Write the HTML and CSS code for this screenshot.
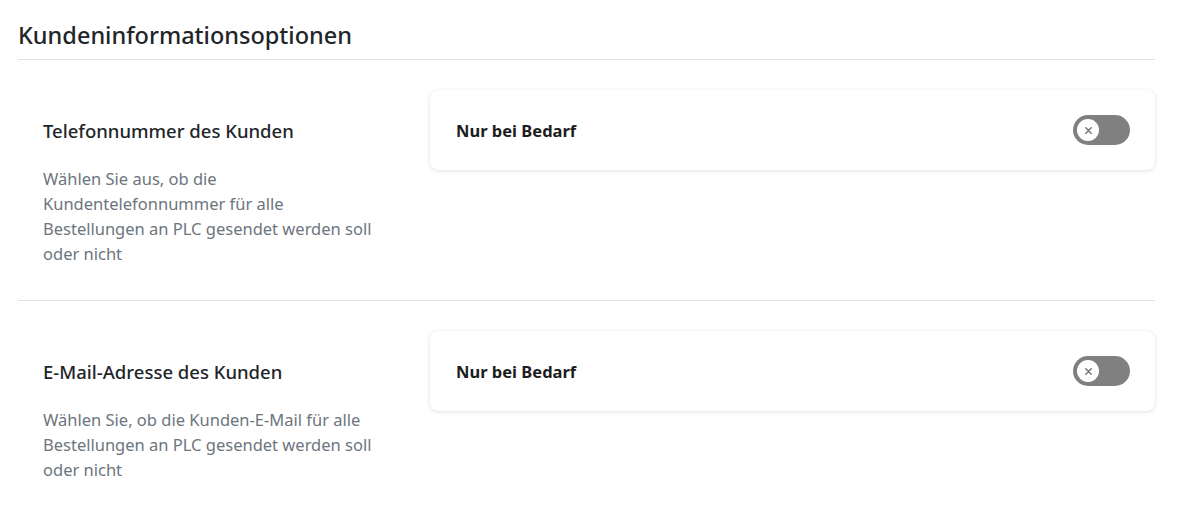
FILE: index.html
```html
<!DOCTYPE html>
<html lang="de">
<head>
<meta charset="utf-8">
<link rel="stylesheet" href="styles.css">
</head>
<body>
<div class="page">
  <h1 class="page-title">Kundeninformationsoptionen</h1>
  <section class="option">
    <div class="option-info">
      <h2 class="option-title">Telefonnummer des Kunden</h2>
      <p class="option-desc">Wählen Sie aus, ob die Kundentelefonnummer für alle Bestellungen an PLC gesendet werden soll oder nicht</p>
    </div>
    <div class="option-card">
      <span class="card-label">Nur bei Bedarf</span>
      <span class="toggle"><span class="knob"><svg viewBox="0 0 10 10" width="9" height="9"><path d="M2 2L8 8M8 2L2 8" stroke="#7a7a7a" stroke-width="1.7" stroke-linecap="round"/></svg></span></span>
    </div>
  </section>
  <section class="option">
    <div class="option-info">
      <h2 class="option-title">E-Mail-Adresse des Kunden</h2>
      <p class="option-desc">Wählen Sie, ob die Kunden-E-Mail für alle Bestellungen an PLC gesendet werden soll oder nicht</p>
    </div>
    <div class="option-card">
      <span class="card-label">Nur bei Bedarf</span>
      <span class="toggle"><span class="knob"><svg viewBox="0 0 10 10" width="9" height="9"><path d="M2 2L8 8M8 2L2 8" stroke="#7a7a7a" stroke-width="1.7" stroke-linecap="round"/></svg></span></span>
    </div>
  </section>
</div>
</body>
</html>
```

FILE: styles.css
```css
* { box-sizing: border-box; }
html, body { margin: 0; padding: 0; background: #fff; }
body { font-family: "Noto Sans", "Open Sans", sans-serif; color: #212529; }
.page { padding: 0 22px 0 18px; }
.page-title {
  margin: 0;
  padding-top: 19px;
  padding-bottom: 8px;
  font-size: 23.5px;
  line-height: 32px;
  font-weight: 500;
  color: #212529;
  border-bottom: 1px solid #dee2e6;
}
.option {
  display: flex;
  align-items: flex-start;
  padding-top: 30px;
  padding-bottom: 34px;
  border-bottom: 1px solid #dee2e6;
}
.option:last-child { border-bottom: none; }
.option-info {
  width: 400px;
  flex: none;
  padding: 29px 40px 0 25px;
}
.option-title {
  margin: 0 0 23px;
  font-size: 18.5px;
  line-height: 24px;
  font-weight: 500;
  color: #212529;
}
.option-desc {
  margin: 0;
  font-size: 16.5px;
  line-height: 25px;
  color: #6c757d;
}
.option-card {
  flex: 1;
  height: 80px;
  margin-left: 12px;
  display: flex;
  align-items: center;
  justify-content: space-between;
  padding: 0 25px 0 26px;
  background: #fff;
  border-radius: 8px;
  box-shadow: 0 1px 4px rgba(0,0,0,0.12), 0 0 1px rgba(0,0,0,0.06);
}
.card-label {
  font-size: 16.5px;
  font-weight: 700;
  color: #1d1d1d;
}
.toggle {
  width: 57px;
  height: 30px;
  border-radius: 15px;
  background: #808080;
  display: flex;
  align-items: center;
  padding-left: 4px;
}
.knob {
  width: 22px;
  height: 22px;
  border-radius: 50%;
  background: #fff;
  display: flex;
  align-items: center;
  justify-content: center;
}
.knob svg { display: block; }
```
